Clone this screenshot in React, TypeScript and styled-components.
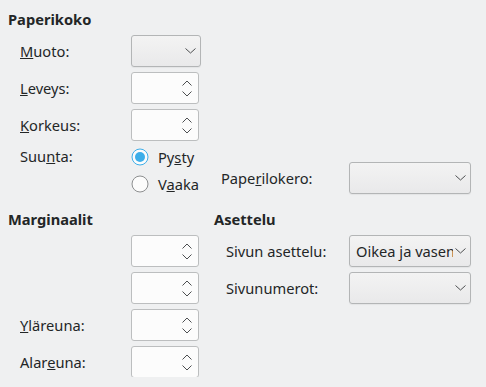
import styled, { createGlobalStyle } from 'styled-components'

const Global = createGlobalStyle`
    html, body {
        margin: 0;
        background: #eff0f1;
    }
    body {
        font-family: 'Noto Sans', 'DejaVu Sans', sans-serif;
        font-size: 14.67px;
        color: #232627;
    }
`

function Chevron({ up = false, w = 10 }: { up?: boolean; w?: number }) {
    const m = w / 2
    return (
        <svg width={w} height="6" viewBox={`0 0 ${w} 6`}>
            <path
                d={up ? `M0.5 5.5 L${m} 1 L${w - 0.5} 5.5` : `M0.5 0.5 L${m} 5 L${w - 0.5} 0.5`}
                fill="none"
                stroke="#4d4f51"
                strokeWidth="1"
            />
        </svg>
    )
}

function Combo({ value = '', wide = false }: { value?: string; wide?: boolean }) {
    return (
        <ComboBox $wide={wide}>
            <ComboText>{value}</ComboText>
            <Chevron w={11} />
        </ComboBox>
    )
}

function Spin() {
    return (
        <SpinBox>
            <Arrows>
                <Chevron up />
                <Chevron />
            </Arrows>
        </SpinBox>
    )
}

function Radio({ checked = false }: { checked?: boolean }) {
    return (
        <svg width="18" height="18" viewBox="0 0 18 18">
            <circle
                cx="9"
                cy="9"
                r="8"
                fill="#fcfcfc"
                stroke={checked ? '#3daee9' : '#8d8f90'}
                strokeWidth="1"
            />
            {checked && <circle cx="9" cy="9" r="5" fill="#3daee9" />}
        </svg>
    )
}

export default function App() {
    return (
        <>
            <Global />
            <Page>
                <Heading>Paperikoko</Heading>

                <Row>
                    <Label>
                        <u>M</u>uoto:
                    </Label>
                    <Combo />
                </Row>
                <Row>
                    <Label>
                        <u>L</u>eveys:
                    </Label>
                    <Spin />
                </Row>
                <Row>
                    <Label>
                        <u>K</u>orkeus:
                    </Label>
                    <Spin />
                </Row>

                <Row $auto>
                    <Label $top>
                        Suu<u>n</u>ta:
                    </Label>
                    <RadioGroup>
                        <RadioRow>
                            <Radio checked />
                            <span>
                                Py<u>s</u>ty
                            </span>
                        </RadioRow>
                        <RadioRow>
                            <Radio />
                            <span>
                                V<u>a</u>aka
                            </span>
                        </RadioRow>
                    </RadioGroup>
                    <RightLabel $indent={7} $bottom>
                        Pape<u>r</u>ilokero:
                    </RightLabel>
                    <Bottom>
                        <Combo wide />
                    </Bottom>
                </Row>

                <HeadRow>
                    <Heading>Marginaalit</Heading>
                    <Heading>Asettelu</Heading>
                </HeadRow>

                <Row>
                    <Label />
                    <Spin />
                    <RightLabel $indent={12}>Sivun asettelu:</RightLabel>
                    <Combo wide value="Oikea ja vasen" />
                </Row>
                <Row>
                    <Label />
                    <Spin />
                    <RightLabel $indent={12}>Sivunumerot:</RightLabel>
                    <Combo wide />
                </Row>
                <Row>
                    <Label>
                        <u>Y</u>läreuna:
                    </Label>
                    <Spin />
                </Row>
                <Row>
                    <Label>
                        Alar<u>e</u>una:
                    </Label>
                    <Spin />
                </Row>
            </Page>
        </>
    )
}

const Page = styled.div`
    display: flex;
    flex-direction: column;
    gap: 6px;
    padding: 9px 8px 0;
`

const Heading = styled.div`
    font-weight: bold;
    line-height: 20px;
`

const HeadRow = styled.div`
    display: grid;
    grid-template-columns: 206px 1fr;
    margin-top: 9px;
`

const Row = styled.div<{ $auto?: boolean }>`
    display: grid;
    grid-template-columns: 111px 83px 135px 121px;
    height: ${(p) => (p.$auto ? 'auto' : '31px')};
    padding-left: 12px;
    align-items: center;
`

const Label = styled.div<{ $top?: boolean }>`
    line-height: 20px;
    align-self: ${(p) => (p.$top ? 'start' : 'center')};
`

const RightLabel = styled.div<{ $indent: number; $bottom?: boolean }>`
    padding-left: ${(p) => p.$indent}px;
    line-height: 20px;
    align-self: ${(p) => (p.$bottom ? 'end' : 'center')};
    margin-bottom: ${(p) => (p.$bottom ? '6px' : '0')};
`

const Bottom = styled.div`
    align-self: end;
`

const RadioGroup = styled.div`
    display: flex;
    flex-direction: column;
    gap: 6px;
`

const RadioRow = styled.div`
    display: flex;
    align-items: center;
    gap: 9px;
    height: 21px;
    line-height: 20px;
`

const ComboBox = styled.div<{ $wide: boolean }>`
    box-sizing: border-box;
    width: ${(p) => (p.$wide ? '122px' : '70px')};
    height: 32px;
    display: flex;
    align-items: center;
    gap: 2px;
    padding: 0 4px 0 6px;
    border: 1px solid #b3b5b6;
    border-radius: 3px;
    background: linear-gradient(#f3f3f3, #e9e9ea);
    box-shadow: 0 1px 1px rgba(0, 0, 0, 0.05);
`

const ComboText = styled.span`
    flex: 1;
    overflow: hidden;
    white-space: nowrap;
    line-height: 20px;
`

const SpinBox = styled.div`
    box-sizing: border-box;
    width: 68px;
    height: 32px;
    display: flex;
    justify-content: flex-end;
    align-items: center;
    padding-right: 6px;
    border: 1px solid #bcbebf;
    border-radius: 3px;
    background: #fcfcfc;
`

const Arrows = styled.div`
    display: flex;
    flex-direction: column;
    gap: 5px;
`
